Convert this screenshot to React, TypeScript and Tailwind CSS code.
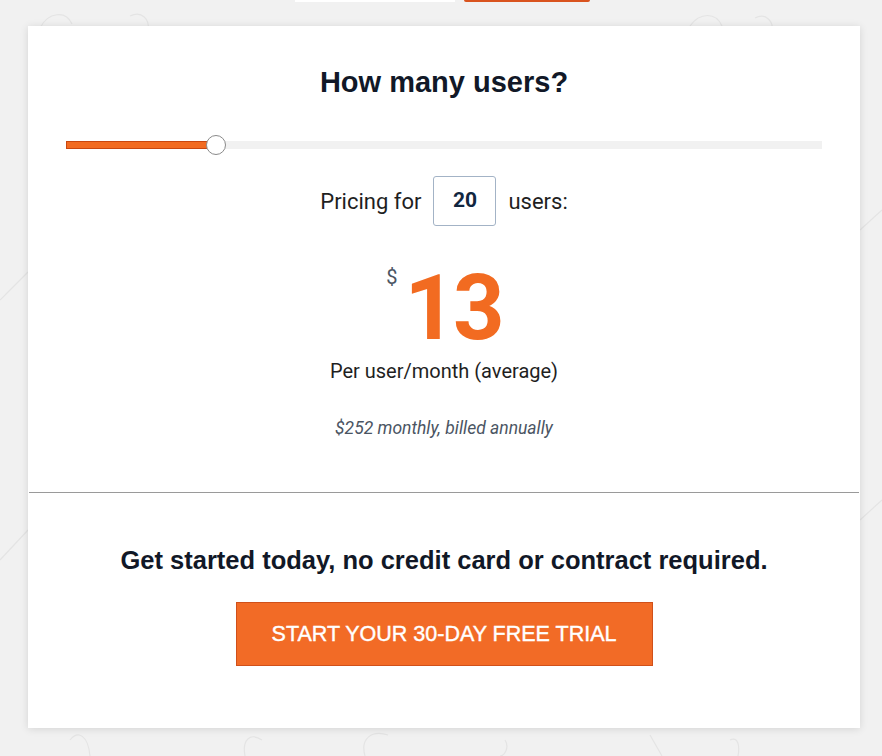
import React from "react";

const users = 20;
const fillPct = 19.8;

// faint line-art that shows through the page background
function BackgroundDoodles() {
  return (
    <svg className="absolute inset-0 w-full h-full pointer-events-none" viewBox="0 0 882 756" fill="none" stroke="#e4e4e4" strokeWidth="1.2">
      <path d="M40 28 C48 12 66 10 72 24" />
      <path d="M130 16 C142 10 150 20 148 30" />
      <path d="M690 26 C700 12 716 12 722 26" />
      <path d="M755 18 C766 12 774 22 772 32" />
      <path d="M0 300 L28 272" />
      <path d="M0 560 L28 530" />
      <path d="M860 520 L882 500" />
      <path d="M860 230 L882 210" />
      <path d="M70 740 C78 730 88 735 90 756" />
      <path d="M245 756 C242 740 250 732 262 740" />
      <path d="M365 756 C360 738 372 730 388 735" />
      <path d="M505 740 C510 748 504 756 500 756" />
      <path d="M650 735 L662 756" />
      <path d="M730 740 C738 736 740 746 738 756" />
    </svg>
  );
}

export default function App() {
  return (
    <div className="relative min-h-screen w-full bg-[#f1f1f1] overflow-hidden" style={{ fontFamily: "Roboto, 'Liberation Sans', sans-serif" }}>
      <BackgroundDoodles />

      {/* Cut-off buttons from the section above */}
      <div className="relative h-[26px] flex items-start">
        <div className="ml-[295px] w-[160px] h-[2px] bg-white" />
        <div className="ml-[9px] w-[126px] h-[2px] bg-[#d9531e] rounded-b-full" />
      </div>

      {/* Pricing card */}
      <div className="relative ml-[28px] w-[832px] bg-white shadow-[0_1px_8px_rgba(0,0,0,0.12)]">
        <div className="pt-[40px] px-[38px] pb-[53px] flex flex-col items-center">
          <h2
            className="h-[32px] leading-[32px] text-[29px] font-bold text-[#111827]"
            style={{ fontFamily: "'Liberation Sans', Arial, sans-serif" }}
          >
            How many users?
          </h2>

          {/* Slider */}
          <div className="mt-[37px] w-full h-[20px] relative flex items-center">
            <div className="w-full h-[8px] bg-[#f1f1f1] flex">
              <div className="h-full bg-[#f26b21] border border-[#c9470f]" style={{ width: `${fillPct}%` }} />
            </div>
            <div
              className="absolute top-0 w-[20px] h-[20px] rounded-full bg-white border border-[#8a8a8a] -translate-x-1/2"
              style={{ left: `${fillPct}%` }}
            />
          </div>

          {/* Pricing row */}
          <div className="mt-[21px] h-[50px] flex items-center gap-[12px] text-[22px] text-[#1f1f1f]">
            <span>Pricing for</span>
            <div className="w-[63px] h-[50px] border border-[#a3b3c6] rounded-[3px] flex items-center justify-center text-[21px] font-bold text-[#12263f]">
              {users}
            </div>
            <span>users:</span>
          </div>

          {/* Price */}
          <div className="mt-[38px] h-[90px] flex items-start">
            <span className="mt-[1px] mr-[7px] text-[20px] leading-[24px] text-[#4b5563]">$</span>
            <span className="text-[90px] leading-none font-bold text-[#f26b21] tracking-[-3px]">13</span>
          </div>

          <p className="mt-[5px] h-[24px] leading-[24px] text-[20px] text-[#1f1f1f]">Per user/month (average)</p>
          <p className="mt-[34px] h-[22px] leading-[22px] text-[17.5px] italic text-[#4b5563]">$252 monthly, billed annually</p>
        </div>

        <div className="mx-[1px] h-[1px] bg-[#9a9a9a]" />

        <div className="pt-[52px] pb-[62px] flex flex-col items-center">
          <p
            className="h-[30px] leading-[30px] text-[25.5px] font-bold text-[#111827]"
            style={{ fontFamily: "'Liberation Sans', Arial, sans-serif" }}
          >
            Get started today, no credit card or contract required.
          </p>
          <button
            className="mt-[27px] w-[417px] h-[64px] bg-[#f26b26] border border-[#d0501a] text-white text-[21.5px] uppercase [-webkit-text-stroke:0.4px_white]"
            style={{ fontFamily: "'Liberation Sans', Arial, sans-serif" }}
          >
            Start your 30-day free trial
          </button>
        </div>
      </div>
    </div>
  );
}
